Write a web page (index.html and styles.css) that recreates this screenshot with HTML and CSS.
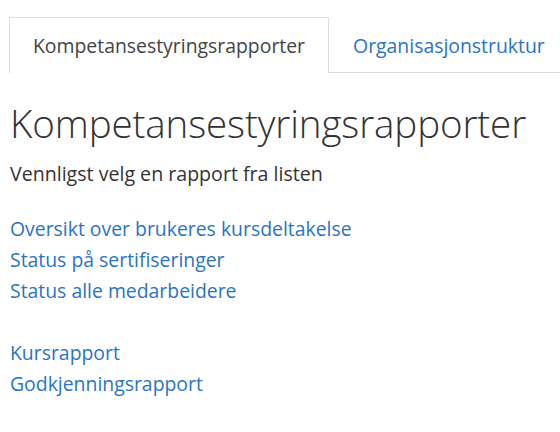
FILE: index.html
```html
<!DOCTYPE html>
<html lang="no">
<head>
    <meta charset="UTF-8">
    <meta name="viewport" content="width=device-width, initial-scale=1.0">
    <title>Kompetansestyringsrapporter</title>
    <link rel="stylesheet" href="styles.css">
</head>
<body>
    <ul class="tabs">
        <li class="tab active"><a href="#">Kompetansestyringsrapporter</a></li>
        <li class="tab"><a href="#">Organisasjonstruktur</a></li>
    </ul>
    <div class="content">
        <h1>Kompetansestyringsrapporter</h1>
        <p class="lead">Vennligst velg en rapport fra listen</p>
        <ul class="reports">
            <li><a href="#">Oversikt over brukeres kursdeltakelse</a></li>
            <li><a href="#">Status på sertifiseringer</a></li>
            <li><a href="#">Status alle medarbeidere</a></li>
        </ul>
        <ul class="reports">
            <li><a href="#">Kursrapport</a></li>
            <li><a href="#">Godkjenningsrapport</a></li>
        </ul>
    </div>
</body>
</html>
```

FILE: styles.css
```css
body {
    margin: 0;
    padding: 17px 0 0 9px;
    font-family: "Open Sans", "Noto Sans", sans-serif;
    color: #333;
    background: #fff;
}

a {
    color: #2a74c4;
    text-decoration: none;
}

.tabs {
    display: flex;
    list-style: none;
    margin: 0;
    padding: 0;
    border-bottom: 1px solid #ddd;
}

.tab {
    margin-bottom: -1px;
}

.tab a {
    display: block;
    height: 54px;
    line-height: 56px;
    padding: 0 23px;
    font-size: 19.4px;
    border: 1px solid transparent;
    border-bottom: none;
}

.tab.active a {
    color: #444;
    background: #fff;
    border-color: #ddd;
    height: 55px;
}

.content {
    padding-left: 1px;
}

h1 {
    margin: 24px 0 0;
    font-size: 38.5px;
    font-weight: 300;
    line-height: 52px;
    letter-spacing: -0.1px;
}

.lead {
    margin: 12px 0 26px;
    font-size: 19.6px;
    line-height: 26px;
}

.reports {
    list-style: none;
    margin: 0 0 31px;
    padding: 0;
}

.reports li {
    font-size: 19.4px;
    line-height: 31px;
}
```
